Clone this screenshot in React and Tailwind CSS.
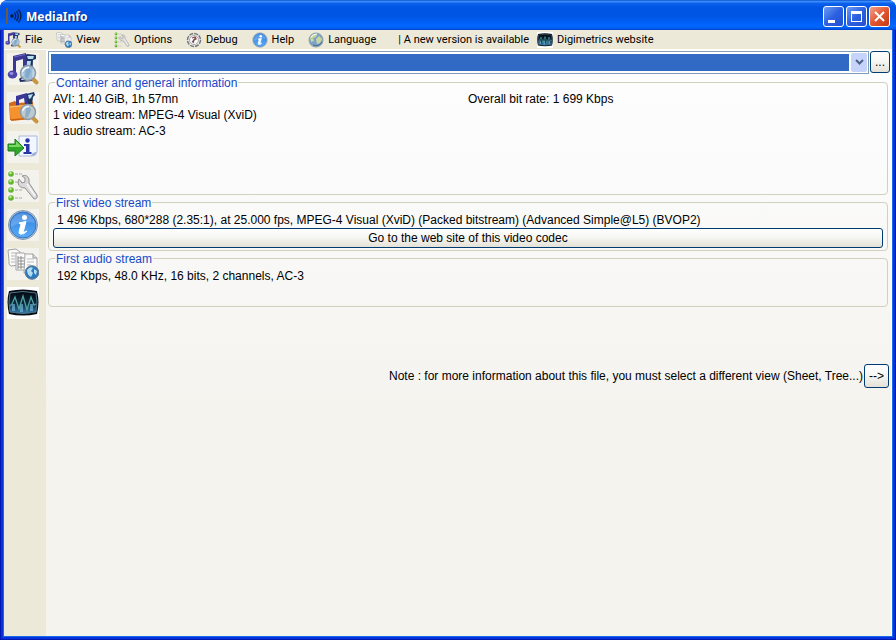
import { useState } from "react";

function Magnifier() {
  return (
    <>
      <path d="M26 26 L29.500 29.500" stroke="#c9973f" strokeWidth="4" strokeLinecap="round" />
      <circle cx="21" cy="20" r="7.500" fill="#b5d4ea" fillOpacity=".85" stroke="#8d98a5" strokeWidth="1.500" />
      <path d="M19 15 L22 14 L24 18 L21 25 L18 26 Z" fill="#6b9cc8" fillOpacity=".6" />
      <path d="M15.500 19 Q17 14.500 22 14.500" fill="none" stroke="#f5fbff" strokeWidth="1.500" />
    </>
  );
}

function NoteIcon({ className }) {
  return (
    <svg viewBox="0 0 32 32" className={className}>
      <path d="M17 3 L20 1 L29 2 L29 6 L26 7 L25 28 L13 29 L12 26 L17 22 Z" fill="#1f3560" />
      <path d="M20 3 L27 3 L26 6 L21 6 Z M20 8 L24 8 L23 14 L19 17 Z M15 25 L20 24 L20 27 L14 27 Z" fill="#b9dcf2" />
      <path d="M6 3 L19 0 L20 20 L16 21 L16 6 L9 8 L9 22 L6 22 Z" fill="#3b3796" />
      <path d="M7 4 L18 1.500" stroke="#6f6bc4" strokeWidth="1" />
      <ellipse cx="5.500" cy="21.500" rx="4.800" ry="4" fill="#4a46a8" />
      <ellipse cx="4.500" cy="20.500" rx="2" ry="1.400" fill="#918ee0" />
      <Magnifier />
    </svg>
  );
}

function FolderIcon({ className }) {
  return (
    <svg viewBox="0 0 32 32" className={className}>
      <path d="M2 11 L8 9 L10 11 L26 10 L27 26 L3 28 Z" fill="#d4691a" />
      <path d="M19 2 L27 0 L28 3 L26 5 L25 13 L19 13 Z" fill="#1f3560" />
      <path d="M21 3 L26 2 L24 6 L22 7 Z" fill="#b9dcf2" />
      <path d="M9 4 L20 1 L21 13 L18 13 L17 6 L12 8 L12 14 L9 14 Z" fill="#3b3796" />
      <path d="M2 14 L26 12 L26 27 L4 29 Z" fill="#f5922e" />
      <path d="M3 15 L25 13" stroke="#ffc27a" strokeWidth="1" />
      <path d="M4 28 L25 26" stroke="#c9600f" strokeWidth="1.500" />
      <Magnifier />
    </svg>
  );
}

function ExportIcon({ className }) {
  return (
    <svg viewBox="0 0 32 32" className={className}>
      <path d="M12 5 H30 V21 Q29 25 25 25 H12 Z" fill="#f2f6ff" stroke="#a9b9dd" />
      <path d="M24 25 Q25 21 30 21 L28 24 Z" fill="#9db2df" />
      <circle cx="20.500" cy="9.500" r="2.200" fill="#2836a6" />
      <path d="M17 13 H22.500 V21 H24.500 V23 H16.500 V21 H19 V15 H17 Z" fill="#2836a6" />
      <path d="M1 13 H8 V8 L17 17 L8 25 V20 H1 Z" fill="#2fa82a" stroke="#1e7d1d" />
      <path d="M2 14 H9 V10 L15 16 H2 Z" fill="#79d860" />
    </svg>
  );
}

function OptionsIcon({ className }) {
  return (
    <svg viewBox="0 0 32 32" className={className}>
      {[4, 12, 20, 28].map((y) => (
        <g key={y}>
          <circle cx="4" cy={y} r="2.800" fill="#5fb52d" />
          <circle cx="3.500" cy={y - 1} r="1.200" fill="#c5ee9a" />
          <path d={`M8 ${y} H15`} stroke="#c2c2c2" strokeWidth="1.500" strokeDasharray="3 1" />
        </g>
      ))}
      <path
        d="M12 9 L15 13 L18 12 L18 8 L15 6 Q20 4 22 9 L22 13 L30 25 Q31 29 27 29 L18 18 Q12 18 11 13 Z"
        fill="#d9d9da"
        stroke="#929294"
      />
      <path d="M20 14 L28 26" stroke="#f8f8f8" strokeWidth="1.500" />
    </svg>
  );
}

function InfoIcon({ className }) {
  return (
    <svg viewBox="0 0 32 32" className={className}>
      <defs>
        <linearGradient id="infoBall" x1="0" y1="0" x2="0" y2="1">
          <stop offset="0" stopColor="#2f7fdc" />
          <stop offset="1" stopColor="#58acf8" />
        </linearGradient>
      </defs>
      <circle cx="16" cy="16" r="14.500" fill="#b8cce3" stroke="#8095ae" />
      <circle cx="16" cy="16" r="13" fill="url(#infoBall)" stroke="#3972bd" />
      <path d="M4 15 Q5 5 16 4 Q26 5 28 14 Q17 11 4 18 Z" fill="#fff" fillOpacity=".18" />
      <circle cx="17.500" cy="8.500" r="2.500" fill="#fff" />
      <path d="M12 14 L19 12.500 L16.500 22 Q17 24 20 22 Q17 26 13 25 Q11.500 24 12.500 21 L14 15.500 Z" fill="#fff" stroke="#fff" />
    </svg>
  );
}

function ViewIcon({ className }) {
  return (
    <svg viewBox="0 0 32 32" className={className}>
      <g stroke="#a2a2a2" fill="#fafafa">
        <path d="M1 2 L9 1 L13 4 L13 17 L4 18 Q1 17 2 13 Z" />
        <path d="M9 5 H17 L20 8 V22 H9 Z" />
        <path d="M18 6 H26 L30 10 V25 H17 Z" />
      </g>
      <path d="M4 5 H9 M4 8 H8 M4 11 H8 M4 14 H8" stroke="#b5b5b5" />
      <path d="M11 8 V21 M14 8 V21 M11 10 H17 M11 13 H17 M11 16 H17 M11 19 H17" stroke="#8e8e8e" />
      <path d="M20 11 H27 M20 14 H27 M20 17 H24" stroke="#bbb" />
      <path d="M26 6 V10 H30" stroke="#999" fill="#ddd" />
      <circle cx="25" cy="24.500" r="6.800" fill="#2c79bd" stroke="#66798b" />
      <path d="M20 22 Q23 18 26 20 L24 23 L26 25 L24 29 Q20 27 20 22 Z M27 21 L30 23 L29 27 L27 25 Z" fill="#b5ddf2" />
    </svg>
  );
}

function WaveIcon({ className }) {
  return (
    <svg viewBox="0 0 32 32" className={className}>
      <defs>
        <linearGradient id="waveScreen" x1="0" y1="0" x2="0" y2="1">
          <stop offset="0" stopColor="#04090f" />
          <stop offset=".55" stopColor="#0c2840" />
          <stop offset="1" stopColor="#367dad" />
        </linearGradient>
      </defs>
      <path d="M2 4 Q16 1 30 4 Q33 15 30 27 Q16 30 2 27 Q-1 15 2 4 Z" fill="#080c12" />
      <path d="M3 6 Q16 3 29 6 Q31 15 29 25 Q16 28 3 25 Q1 15 3 6 Z" fill="url(#waveScreen)" stroke="#4b7488" />
      <path d="M5 24 V17 H8 V24 M13 25 V17 H16 V25 M23 24 V17 H26 V24" fill="#86cdf2" fillOpacity=".55" />
      <path d="M3 19 L5 17 L8 10 L12 22 L16 9 L20 23 L24 10 L27 18 L29 17" fill="none" stroke="#4fa39b" strokeWidth="1.300" />
    </svg>
  );
}

function BugIcon({ className }) {
  return (
    <svg viewBox="0 0 16 16" className={className}>
      <circle cx="8" cy="8" r="6.500" fill="#eee" stroke="#777" strokeWidth="1.500" strokeDasharray="4 1" />
      <circle cx="8" cy="8" r="4.500" fill="#f9f9f9" stroke="#aaa" />
      <path d="M6 6 L9 5 L10 7 L8 8 L7 11" fill="none" stroke="#8e4545" strokeWidth="1.300" />
      <path d="M10 5 L6 10" stroke="#555" />
    </svg>
  );
}

function GlobeIcon({ className }) {
  return (
    <svg viewBox="0 0 16 16" className={className}>
      <circle cx="8" cy="8" r="7" fill="#7aa3c7" stroke="#8d9dab" />
      <path d="M2 5 Q5 1 9 2 L8 5 L5 6 L6 9 L3 10 Z M8 7 L11 4 L14 7 L12 11 L9 12 Z" fill="#c9d6a0" />
      <path d="M3 5 Q5 2 9 2" stroke="#fff" fill="none" />
      <path d="M5 13 Q11 15 14 10" stroke="#496a8b" fill="none" />
    </svg>
  );
}

function LogoIcon() {
  return (
    <svg viewBox="0 0 16 16" className="size-4">
      <path d="M1 0 V16" stroke="#6b5a48" strokeWidth="2" />
      <circle cx="6" cy="8" r="1.800" fill="#05173f" />
      <path d="M8.500 4.500 Q11 8 8.500 11.500 M10.500 3 Q14 8 10.500 13 M12.500 1.500 Q17.500 8 12.500 14.500" fill="none" stroke="#05173f" strokeWidth="1.200" />
    </svg>
  );
}

const menu = [
  { label: "File", Icon: NoteIcon },
  { label: "View", Icon: ViewIcon },
  { label: "Options", Icon: OptionsIcon },
  { label: "Debug", Icon: BugIcon },
  { label: "Help", Icon: InfoIcon },
  { label: "Language", Icon: GlobeIcon },
];

const tools = [
  { label: "Open file", Icon: NoteIcon },
  { label: "Open folder", Icon: FolderIcon },
  { label: "Export", Icon: ExportIcon },
  { label: "Options", Icon: OptionsIcon },
  { label: "About", Icon: InfoIcon },
  { label: "View", Icon: ViewIcon },
  { label: "Digimetrics", Icon: WaveIcon, white: true },
];

const xpButton =
  "rounded-[3px] border border-[#003c74] bg-linear-to-b from-white via-[#f5f5f1] to-[#e4e1d6] flex items-center justify-center";
const captionButton = "size-[21px] rounded-[3px] border border-white flex items-center justify-center";
const blueCaption = "bg-linear-to-br from-[#6f9bf5] via-[#2c60e0] to-[#2450d0]";

function Group({ title, className, children }) {
  return (
    <fieldset className={`min-w-0 rounded-[4px] border border-[#d0d0bf] px-1 ${className}`}>
      <legend className="ml-[2px] px-px pt-[2px] text-[#1648c8] leading-3">{title}</legend>
      {children}
    </fieldset>
  );
}

export default function App() {
  const [file, setFile] = useState("");

  return (
    <div className="min-h-screen bg-white flex">
      <div className="flex-1 min-w-0 flex flex-col rounded-t-lg bg-[#0831d9]">
        {/* Title bar */}
        <header className="h-[30px] shrink-0 flex items-center px-[6px] pt-[2px] rounded-t-lg bg-[linear-gradient(180deg,#0a50d0_0%,#3a8cf8_5%,#0a5fec_12%,#0054e3_25%,#0055e5_55%,#0066ff_85%,#0062f5_93%,#0040c8_100%)]">
          <LogoIcon />
          <h1 className="ml-1 flex-1 pt-[2px] text-white font-bold text-[12px] leading-4 font-['Noto_Sans',sans-serif] [text-shadow:1px_1px_1px_#0a2a80]">
            MediaInfo
          </h1>
          <div className="flex gap-[2px]">
            <button aria-label="Minimize" className={`${captionButton} ${blueCaption}`}>
              <svg viewBox="0 0 19 19" className="size-[19px]">
                <path d="M4 13 H11 V16 H4 Z" fill="#fff" />
              </svg>
            </button>
            <button aria-label="Maximize" className={`${captionButton} ${blueCaption}`}>
              <svg viewBox="0 0 19 19" className="size-[19px]">
                <path d="M4 4 H15 V15 H4 Z M5 7 V14 H14 V7 Z" fill="#fff" fillRule="evenodd" />
              </svg>
            </button>
            <button aria-label="Close" className={`${captionButton} bg-linear-to-br from-[#f0a088] via-[#e2552f] to-[#c53a14]`}>
              <svg viewBox="0 0 19 19" className="size-[19px]">
                <path d="M5 5 L14 14 M14 5 L5 14" stroke="#fff" strokeWidth="2" />
              </svg>
            </button>
          </div>
        </header>

        <div className="flex-1 flex border-x border-b border-[#0019b0]">
          <div className="flex-1 min-w-0 flex flex-col mx-[2px] mb-[2px] border-x border-b border-[#166aee] bg-[#ece9d8]">
            {/* Menu */}
            <nav className="h-5 shrink-0 flex items-center gap-[14px] pl-px border-b border-white text-[11px] leading-4 text-black font-['Roboto',sans-serif] whitespace-nowrap">
              {menu.map(({ label, Icon }) => (
                <button key={label} className="flex items-center gap-1">
                  <Icon className="size-4" />
                  {label}
                </button>
              ))}
              <div className="ml-2 flex items-center gap-2">
                <a href="#update">| A new version is available</a>
                <a href="#digimetrics" className="flex items-center gap-1">
                  <WaveIcon className="size-4 bg-white" />
                  Digimetrics website
                </a>
              </div>
            </nav>

            <div className="flex-1 flex">
              {/* Toolbar */}
              <aside className="w-[42px] shrink-0 flex flex-col gap-[7px] pl-[3px] pt-[3px]">
                {tools.map(({ label, Icon, white }) => (
                  <button key={label} aria-label={label} className={`size-8 ${white ? "bg-white" : "bg-[#f3f2ec]"}`}>
                    <Icon className="size-8" />
                  </button>
                ))}
              </aside>

              <main className="flex-1 min-w-0 pl-[2px] pt-px pr-px border-r border-white bg-[linear-gradient(180deg,#fefefe_0px,#fbfbfb_120px,#f4f3ee_360px)] text-[12px] leading-4 text-black font-['Liberation_Sans',Arial,sans-serif]">
                <div className="flex gap-px">
                  <div className="relative flex-1">
                    <select
                      aria-label="File"
                      value={file}
                      onChange={(e) => setFile(e.target.value)}
                      className="block w-full h-[23px] appearance-none border border-[#7f9db9] py-[2px] pl-[2px] pr-[19px] bg-[#316ac5] bg-clip-content text-white"
                    >
                      <option value=""></option>
                    </select>
                    <span className="pointer-events-none absolute right-[2px] inset-y-[2px] w-4 rounded-[2px] bg-[#c6d4fc] flex items-center justify-center">
                      <svg viewBox="0 0 9 7" className="w-[9px] h-[7px]">
                        <path d="M1 1 L4.500 4.500 L8 1" fill="none" stroke="#4d6185" strokeWidth="2" />
                      </svg>
                    </span>
                  </div>
                  <button aria-label="Browse" className={`${xpButton} w-5 h-[22px]`}>...</button>
                </div>

                <div className="mt-px mr-[2px] flex flex-col">
                  <Group title="Container and general information" className="h-[120px]">
                    <div className="grid grid-cols-2 pt-[2px]">
                      <div>
                        <p>AVI: 1.40 GiB, 1h 57mn</p>
                        <p>1 video stream: MPEG-4 Visual (XviD)</p>
                        <p>1 audio stream: AC-3</p>
                      </div>
                      <p>Overall bit rate: 1 699 Kbps</p>
                    </div>
                  </Group>
                  <Group title="First video stream" className="h-14">
                    <p className="pl-1 pt-[3px]">
                      1 496 Kbps, 680*288 (2.35:1), at 25.000 fps, MPEG-4 Visual (XviD) (Packed bitstream) (Advanced Simple@L5) (BVOP2)
                    </p>
                    <button className={`${xpButton} w-full h-5`}>Go to the web site of this video codec</button>
                  </Group>
                  <Group title="First audio stream" className="h-14">
                    <p className="pl-1 pt-[3px]">192 Kbps, 48.0 KHz, 16 bits, 2 channels, AC-3</p>
                  </Group>
                </div>

                <div className="mt-[57px] mr-px flex items-center justify-end gap-px">
                  <p>Note : for more information about this file, you must select a different view (Sheet, Tree...)</p>
                  <button aria-label="Next view" className={`${xpButton} w-[25px] h-6`}>--&gt;</button>
                </div>
              </main>
            </div>
          </div>
        </div>
      </div>
    </div>
  );
}
